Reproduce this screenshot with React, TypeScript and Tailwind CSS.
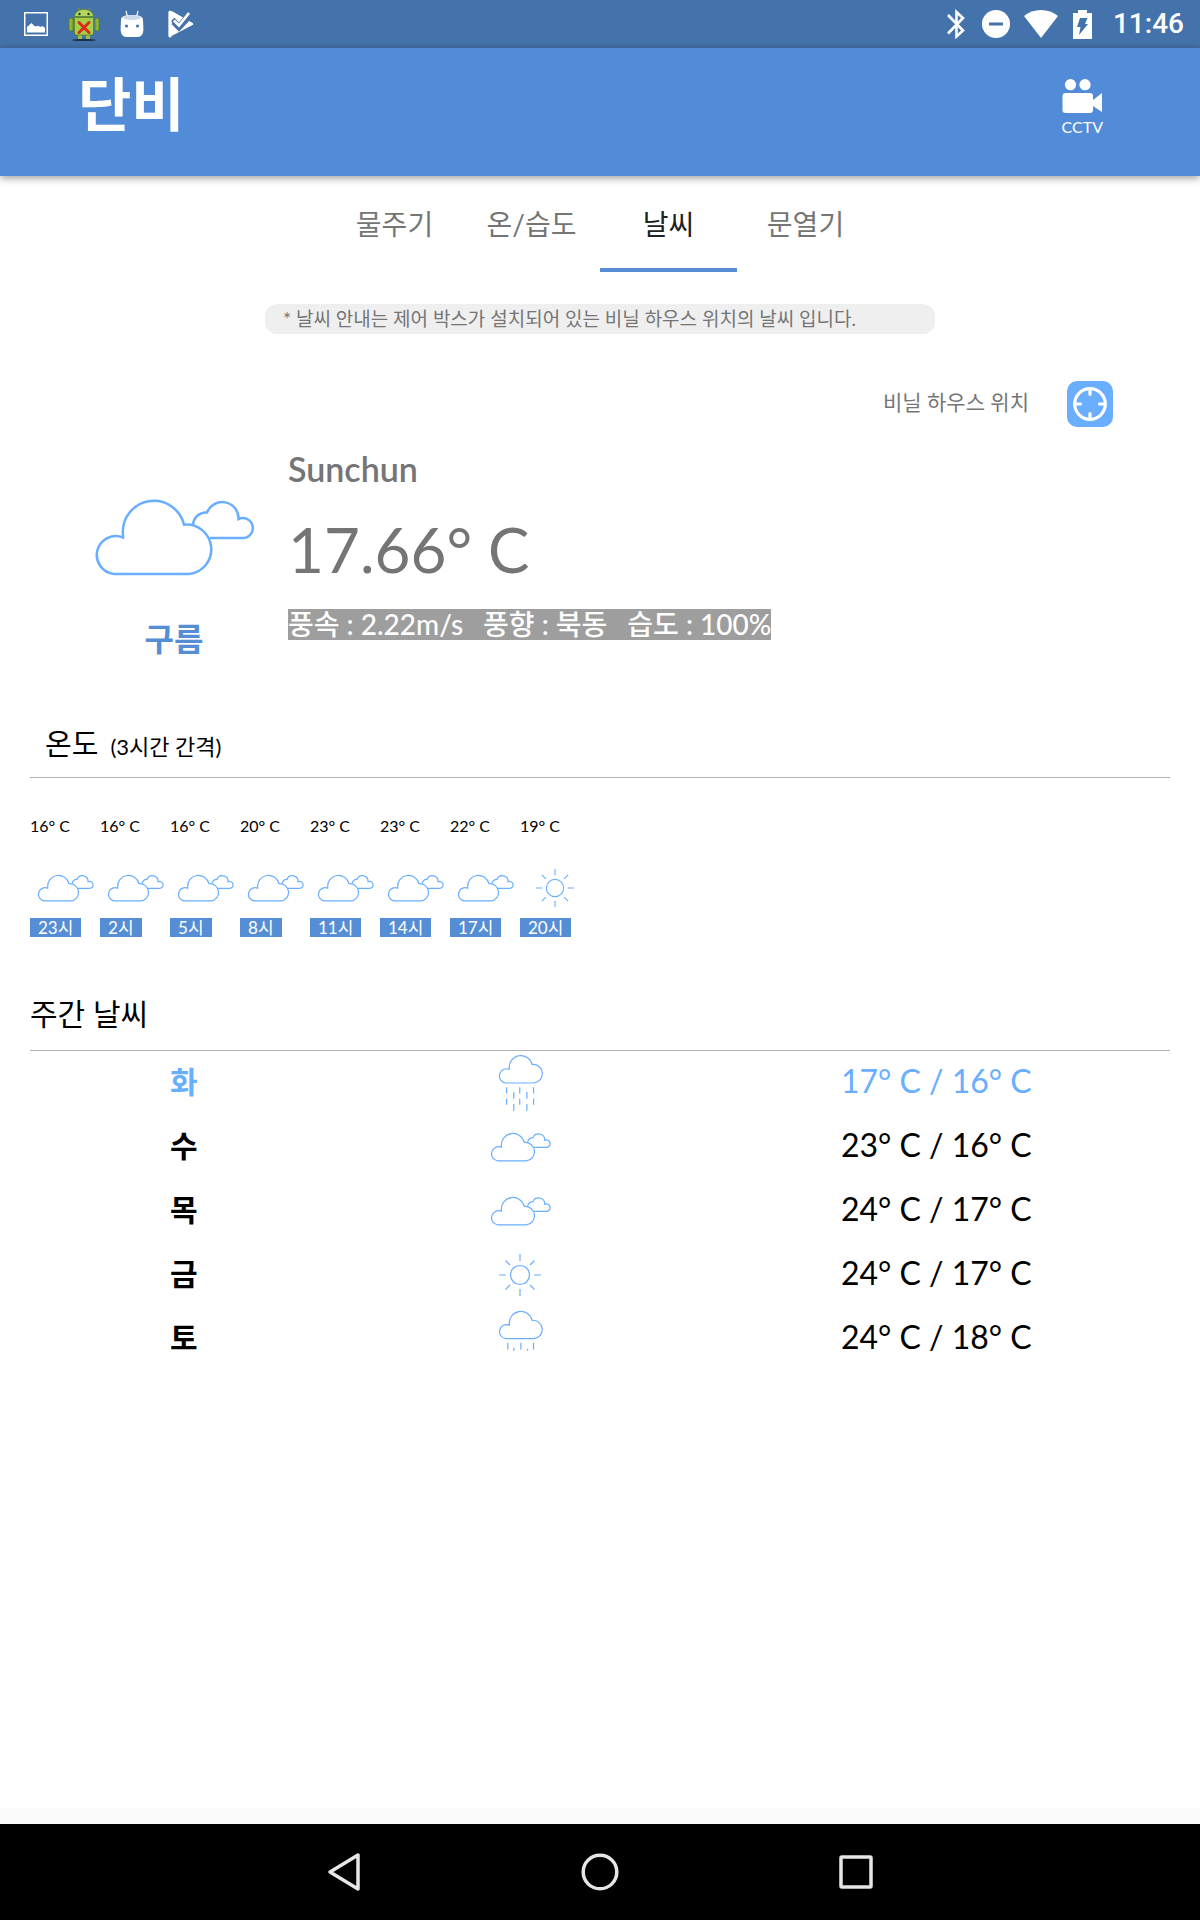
import React from "react";

type Sky = "clouds" | "sun" | "rain" | "drizzle";

const CLOUD = "M21 77A19 19 0 1 1 30 40.5V38A31 31 0 0 1 91 27.7A24.6 24.6 0 0 1 96 77Z";

const hours: { temp: number; sky: Sky; hour: number }[] = [
  { temp: 16, sky: "clouds", hour: 23 },
  { temp: 16, sky: "clouds", hour: 2 },
  { temp: 16, sky: "clouds", hour: 5 },
  { temp: 20, sky: "clouds", hour: 8 },
  { temp: 23, sky: "clouds", hour: 11 },
  { temp: 23, sky: "clouds", hour: 14 },
  { temp: 22, sky: "clouds", hour: 17 },
  { temp: 19, sky: "sun", hour: 20 },
];

const week: { day: string; sky: Sky; high: number; low: number }[] = [
  { day: "화", sky: "rain", high: 17, low: 16 },
  { day: "수", sky: "clouds", high: 23, low: 16 },
  { day: "목", sky: "clouds", high: 24, low: 17 },
  { day: "금", sky: "sun", high: 24, low: 17 },
  { day: "토", sky: "drizzle", high: 24, low: 18 },
];

const tabs = ["물주기", "온/습도", "날씨", "문열기"];

function Clouds({ className, stroke = 1.2 }: { className: string; stroke?: number }) {
  return (
    <svg viewBox="0 0 162 80" className={className} fill="none" stroke="#69aeff" strokeWidth={stroke} aria-label="구름">
      <path d={CLOUD} vectorEffect="non-scaling-stroke" />
      <path
        d="M100 28A13 13 0 0 1 114 15.5A16.3 16.3 0 0 1 145.5 22A10 10 0 1 1 149.5 41H117"
        vectorEffect="non-scaling-stroke"
      />
    </svg>
  );
}

function Sun({ className }: { className: string }) {
  return (
    <svg viewBox="0 0 44 44" className={className} fill="none" stroke="#69aeff" strokeWidth="1.2" aria-label="맑음">
      <circle cx="22" cy="22" r="9.5" />
      <path d="M22 1v7M22 36v7M1 22h7M36 22h7M7.5 7.5l4.5 4.5M32 32l4.5 4.5M36.5 7.5L32 12M12 32l-4.5 4.5" />
    </svg>
  );
}

function Rain() {
  return (
    <svg viewBox="0 0 120 154" className="h-[58px] w-[45px]" fill="none" stroke="#69aeff" strokeWidth="1.2" aria-label="비">
      <path d={CLOUD} vectorEffect="non-scaling-stroke" />
      <path
        d="M23 88v17M23 118v17M42 101v18M42 133v18M58 88v17M58 118v17M77 101v18M77 133v18M95 88v17M95 118v17"
        vectorEffect="non-scaling-stroke"
      />
    </svg>
  );
}

function Drizzle() {
  return (
    <svg viewBox="0 0 120 110" className="h-[41px] w-[45px]" fill="none" stroke="#69aeff" strokeWidth="1.2" aria-label="이슬비">
      <path d={CLOUD} vectorEffect="non-scaling-stroke" />
      <path d="M26 88v18M42 101v8M61 88v18M79 104v5M95 88v18" vectorEffect="non-scaling-stroke" />
    </svg>
  );
}

function StatusBar() {
  return (
    <div className="flex h-12 items-center justify-between bg-[#4472aa] pr-4 pl-6 text-white">
      <div className="flex items-center">
        <svg viewBox="0 0 24 24" className="h-6 w-6" aria-hidden="true">
          <rect x="0.75" y="0.75" width="22.5" height="22.5" fill="none" stroke="currentColor" strokeWidth="1.5" />
          <path fill="currentColor" d="M3 20.500V15l4.500-4 3.500 3.500 3-.8 2.500 1.300 2-1 2.500 2v4.500Z" />
        </svg>
        <svg viewBox="0 0 32 34" className="ml-5 h-[34px] w-8" aria-hidden="true">
          <ellipse cx="16" cy="33" rx="12" ry="1.2" fill="#1f2f48" />
          <path d="M10 1l2.500 4M22 1l-2.500 4" stroke="#6f9a2c" strokeWidth="1.2" />
          <path d="M10 27h4v5h-4zM18 27h4v5h-4z" fill="#9cc03a" />
          <rect x="1" y="11" width="4" height="13" rx="2" fill="#8fb535" stroke="#5c7f1d" strokeWidth="0.7" />
          <rect x="27" y="11" width="4" height="13" rx="2" fill="#8fb535" stroke="#5c7f1d" strokeWidth="0.7" />
          <path d="M6.500 9.500C7 5 11 2.500 16 2.500s9 2.500 9.500 7Z" fill="#b4d65e" stroke="#5c7f1d" strokeWidth="0.7" />
          <circle cx="11.5" cy="7" r="1.2" fill="#253510" />
          <circle cx="20.5" cy="7" r="1.2" fill="#253510" />
          <path d="M6.500 10.500h19V26a2 2 0 0 1-2 2h-15a2 2 0 0 1-2-2Z" fill="#a6d046" stroke="#5c7f1d" strokeWidth="0.7" />
          <path d="M11 15.500l10 10M21 15.500l-10 10" stroke="#dc2a1c" strokeWidth="3" strokeLinecap="round" />
        </svg>
        <svg viewBox="0 0 24 28" className="ml-5 h-7 w-6" aria-hidden="true">
          <path d="M6 1l1.500 6M18 1l-1.500 6" stroke="#fff" strokeWidth="1.2" />
          <path d="M1 10C1 6.500 4 5 12 5s11 1.500 11 5l.4 9c0 5-2 8-6 8H6.600c-4 0-6-3-6-8Z" fill="#fff" />
          <ellipse cx="12" cy="7.5" rx="9" ry="2.5" fill="#ccd9ea" />
          <circle cx="6.5" cy="16" r="1.6" fill="#4472aa" />
          <circle cx="17.5" cy="16" r="1.6" fill="#4472aa" />
        </svg>
        <svg viewBox="0 0 26 28" className="ml-6 h-7 w-[26px]" aria-hidden="true">
          <path d="M2 2.500v23L24 14 4 2.500Z" fill="#fff" stroke="#fff" strokeWidth="2.5" strokeLinejoin="round" />
          <path d="M4.500 9.500l6.500 7L23 2.500" fill="none" stroke="#4472aa" strokeWidth="5.5" />
          <path d="M6 10.500l5 5L21 3" fill="none" stroke="#fff" strokeWidth="2.8" />
          <path d="M2 2v24" stroke="#fff" strokeWidth="3" strokeLinecap="round" />
          <path d="M4 13.500l7 7L25.500 5" fill="none" stroke="#4472aa" strokeWidth="1.6" />
        </svg>
      </div>
      <div className="flex items-center">
        <svg viewBox="0 0 18 30" className="h-[30px] w-[18px]" fill="none" stroke="currentColor" strokeWidth="2.6" aria-hidden="true">
          <path d="M1 6l15 15.500-6.500 6V3l6.500 6L1 24.500" />
        </svg>
        <svg viewBox="0 0 28 28" className="ml-[17px] h-7 w-7" aria-hidden="true">
          <circle cx="14" cy="14" r="14" fill="currentColor" />
          <path d="M7 14h14" stroke="#4472aa" strokeWidth="3" />
        </svg>
        <svg viewBox="0 0 34 28" className="ml-[14px] h-7 w-[34px]" aria-hidden="true">
          <path d="M0 6C9-2 25-2 34 6L17 28Z" fill="currentColor" />
        </svg>
        <svg viewBox="0 0 19 29" className="ml-[15px] h-[29px] w-[19px]" aria-hidden="true">
          <path d="M5 0h9v3h5v26H0V3h5Z" fill="currentColor" />
          <path d="M7 8h7.500l-2.500 6h3L6 25l1.500-8H4Z" fill="#4472aa" />
        </svg>
        <span className="ml-[21px] font-['Roboto',sans-serif] text-[28px] leading-8 font-medium">11:46</span>
      </div>
    </div>
  );
}

function Header() {
  return (
    <header className="relative flex h-32 items-start justify-between bg-[#528cd9] pr-[97px] pl-[78px] text-white shadow-[0_2px_8px_rgba(0,0,0,0.4)]">
      <h1 className="pt-[26px] text-[58px] leading-[60px] font-bold">단비</h1>
      <button className="mt-[31px] flex flex-col items-center">
        <svg viewBox="0 0 40 34" className="h-[34px] w-10" fill="currentColor" aria-hidden="true">
          <circle cx="8.5" cy="5.7" r="5.6" />
          <circle cx="23" cy="5.7" r="5.6" />
          <rect x="0.5" y="14" width="30.5" height="20" rx="3" />
          <path d="M31 21l9-7v19l-9-6Z" />
        </svg>
        <span className="mt-0.5 text-[16px] leading-6">CCTV</span>
      </button>
    </header>
  );
}

function Tabs() {
  return (
    <nav role="tablist" className="flex justify-center">
      {tabs.map((tab) => (
        <button
          key={tab}
          role="tab"
          aria-selected={tab === "날씨"}
          className={
            tab === "날씨"
              ? "h-24 w-[137px] border-b-4 border-[#568ed6] pt-1 text-[28px] text-[#212121]"
              : "h-24 w-[137px] border-b-4 border-transparent pt-1 text-[28px] text-[#757575]"
          }
        >
          {tab}
        </button>
      ))}
    </nav>
  );
}

function Current() {
  return (
    <section className="flex pl-[60px]">
      <div className="flex w-[228px] flex-col items-center pt-[70px]">
        <Clouds className="h-20 w-[162px]" stroke={2.5} />
        <p className="mt-10 text-[32px] leading-[44px] font-bold text-[#568ed6]">구름</p>
      </div>
      <div className="flex flex-col items-start pt-[22px]">
        <p className="text-[34px] leading-10 font-semibold text-[#757575]">Sunchun</p>
        <p className="mt-5 text-[62px] leading-[80px] text-[#757575]">17.66° C</p>
        <p className="mt-5 flex gap-5 bg-[#9e9e9e] text-[28px] leading-[31px] font-medium text-white">
          <span>풍속 : 2.22m/s</span>
          <span>풍향 : 북동</span>
          <span>습도 : 100%</span>
        </p>
      </div>
    </section>
  );
}

function Hourly() {
  return (
    <section className="mt-[50px] px-[30px]">
      <h2 className="flex h-[67px] items-center gap-3 border-b border-[#b2b2b2] pl-[15px] text-[29px] text-black">
        온도 <small className="pt-1 text-[22px]">(3시간 간격)</small>
      </h2>
      <ul className="flex pt-9">
        {hours.map(({ temp, sky, hour }) => (
          <li key={hour} className="flex w-[70px] flex-col items-start">
            <span className="text-[16px] leading-6 text-black">{temp}° C</span>
            <span className="mt-7 flex h-11 w-full items-center justify-center">
              {sky === "sun" ? <Sun className="h-10 w-10" /> : <Clouds className="h-7 w-[57px]" />}
            </span>
            <span className="mt-2 bg-[#568ed6] px-2 text-[17px] leading-[19px] text-white">{hour}시</span>
          </li>
        ))}
      </ul>
    </section>
  );
}

function Weekly() {
  return (
    <section className="mt-12 px-[30px]">
      <h2 className="flex h-[66px] items-center border-b border-[#b2b2b2] pb-2 text-[30px] text-black">주간 날씨</h2>
      <table className="w-full table-fixed text-[32px] text-black">
        <colgroup>
          <col className="w-[27%]" />
          <col className="w-[32%]" />
          <col className="w-[41%]" />
        </colgroup>
        <tbody>
          {week.map(({ day, sky, high, low }, i) => (
            <tr key={day} className={i === 0 ? "text-[#69aeff]" : "text-black"}>
              <th scope="row" className="h-16 p-0 pb-1 text-center text-[30px] leading-10 font-bold">
                {day}
              </th>
              <td className="h-16 p-0">
                <div className={sky === "rain" || sky === "drizzle" ? "flex h-16 justify-center pt-[3px]" : "flex h-16 items-center justify-center"}>
                  {sky === "rain" && <Rain />}
                  {sky === "drizzle" && <Drizzle />}
                  {sky === "sun" && <Sun className="h-11 w-11" />}
                  {sky === "clouds" && <Clouds className="h-[30px] w-[61px]" />}
                </div>
              </td>
              <td className="h-16 p-0 pb-1 text-center leading-10">
                {high}° C / {low}° C
              </td>
            </tr>
          ))}
        </tbody>
      </table>
    </section>
  );
}

function NavBar() {
  return (
    <nav className="flex h-24 items-center justify-center bg-black text-[#e6e6e6]">
      <button aria-label="뒤로" className="flex w-64 justify-center">
        <svg viewBox="0 0 40 40" className="h-10 w-10" fill="none" stroke="currentColor" strokeWidth="3.5" strokeLinejoin="round" aria-hidden="true">
          <path d="M34 3v34L6 20Z" />
        </svg>
      </button>
      <button aria-label="홈" className="flex w-64 justify-center">
        <svg viewBox="0 0 40 40" className="h-10 w-10" fill="none" stroke="currentColor" strokeWidth="3.5" aria-hidden="true">
          <circle cx="20" cy="20" r="16.8" />
        </svg>
      </button>
      <button aria-label="최근 앱" className="flex w-64 justify-center">
        <svg viewBox="0 0 40 40" className="h-10 w-10" fill="none" stroke="currentColor" strokeWidth="3.5" aria-hidden="true">
          <rect x="5" y="5" width="30" height="30" rx="1" />
        </svg>
      </button>
    </nav>
  );
}

export default function App() {
  return (
    <div className="flex min-h-screen flex-col bg-white font-['Lato','Noto_Sans_CJK_KR',sans-serif]">
      <StatusBar />
      <Header />
      <main className="grow">
        <Tabs />
        <p className="mx-auto mt-8 w-[670px] rounded-xl bg-[#efefef] px-[18px] text-[19px] leading-[30px] text-[#757575]">
          * 날씨 안내는 제어 박스가 설치되어 있는 비닐 하우스 위치의 날씨 입니다.
        </p>
        <div className="mt-[47px] flex items-center justify-end gap-[38px] pr-[87px]">
          <span className="pb-1 text-[21px] text-[#757575]">비닐 하우스 위치</span>
          <button aria-label="비닐 하우스 위치" className="flex h-[46px] w-[46px] items-center justify-center rounded-[10px] bg-[#69aeff]">
            <svg viewBox="0 0 34 34" className="h-[34px] w-[34px]" fill="none" stroke="#fff" strokeWidth="3.2" strokeLinecap="round" aria-hidden="true">
              <circle cx="17" cy="17" r="15.3" />
              <path d="M17 3v4.500M17 26.500V31M3 17h4.500M26.500 17H31" />
            </svg>
          </button>
        </div>
        <Current />
        <Hourly />
        <Weekly />
      </main>
      <div className="h-4 bg-[#fafafa]" />
      <NavBar />
    </div>
  );
}
